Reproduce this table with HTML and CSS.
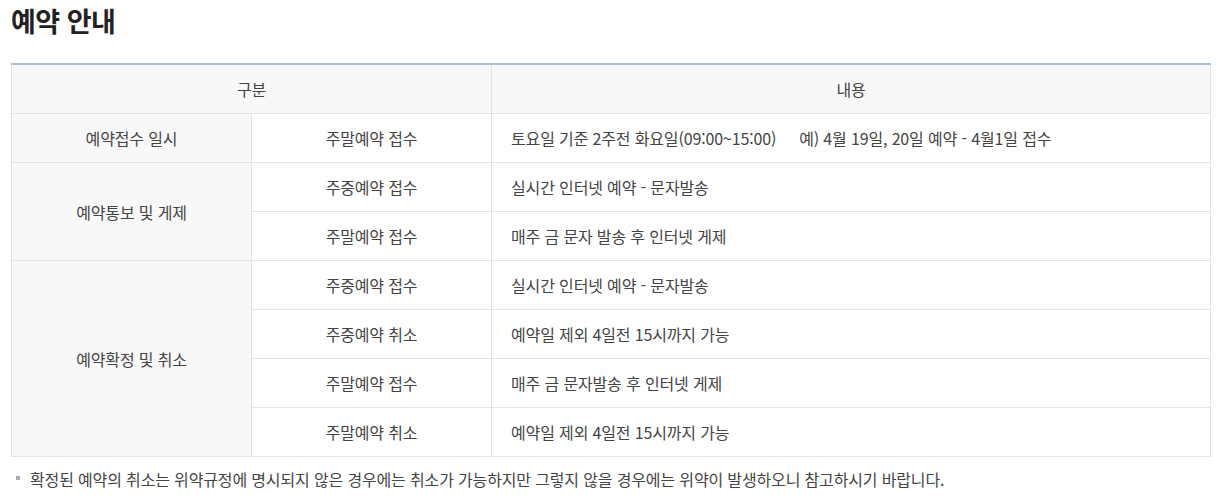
FILE: index.html
```html
<!DOCTYPE html>
<html lang="ko">
<head>
  <meta charset="UTF-8">
  <title>예약 안내</title>
  <link rel="stylesheet" href="styles.css">
</head>
<body>
  <div class="wrap">
    <h2 class="title">예약 안내</h2>

    <table class="info-table">
      <colgroup>
        <col class="c1">
        <col class="c2">
        <col>
      </colgroup>
      <thead>
        <tr>
          <th colspan="2">구분</th>
          <th>내용</th>
        </tr>
      </thead>
      <tbody>
        <tr>
          <th>예약접수 일시</th>
          <td class="mid">주말예약 접수</td>
          <td>토요일 기준 2주전 화요일(09:00~15:00)<span class="gap"></span>예) 4월 19일, 20일 예약 - 4월1일 접수</td>
        </tr>
        <tr>
          <th rowspan="2">예약통보 및 게제</th>
          <td class="mid">주중예약 접수</td>
          <td>실시간 인터넷 예약 - 문자발송</td>
        </tr>
        <tr>
          <td class="mid">주말예약 접수</td>
          <td>매주 금 문자 발송 후 인터넷 게제</td>
        </tr>
        <tr>
          <th rowspan="4">예약확정 및 취소</th>
          <td class="mid">주중예약 접수</td>
          <td>실시간 인터넷 예약 - 문자발송</td>
        </tr>
        <tr>
          <td class="mid">주중예약 취소</td>
          <td>예약일 제외 4일전 15시까지 가능</td>
        </tr>
        <tr>
          <td class="mid">주말예약 접수</td>
          <td>매주 금 문자발송 후 인터넷 게제</td>
        </tr>
        <tr>
          <td class="mid">주말예약 취소</td>
          <td>예약일 제외 4일전 15시까지 가능</td>
        </tr>
      </tbody>
    </table>

    <p class="note">확정된 예약의 취소는 위약규정에 명시되지 않은 경우에는 취소가 가능하지만 그렇지 않을 경우에는 위약이 발생하오니 참고하시기 바랍니다.</p>
  </div>
</body>
</html>
```

FILE: styles.css
```css
body {
  margin: 0;
  font-family: "Noto Sans CJK KR", "Noto Sans", sans-serif;
  color: #444;
  background: #fff;
}

.wrap {
  padding: 0 16px 0 11px;
}

.title {
  margin: 0;
  padding-top: 2px;
  font-size: 27px;
  line-height: 38px;
  font-weight: 700;
  color: #222;
  letter-spacing: -0.5px;
}

.info-table {
  width: 1200px;
  margin-top: 23px;
  border-collapse: collapse;
  border-top: 2px solid #a7c3df;
  font-size: 16px;
  letter-spacing: -0.15px;
  table-layout: fixed;
}

.info-table col.c1,
.info-table col.c2 {
  width: 240px;
}

.info-table th,
.info-table td {
  height: 48px;
  padding: 0 19px;
  border: 1px solid #e3e3e3;
  font-weight: 400;
  color: #444;
  vertical-align: middle;
}

.info-table thead th {
  border-top: none;
}

.info-table th {
  background: #f8f8f8;
  text-align: center;
}

.info-table td.mid {
  text-align: center;
}

.gap {
  display: inline-block;
  width: 23px;
}

.note {
  position: relative;
  margin: 11px 0 0;
  padding-left: 19px;
  font-size: 16px;
  letter-spacing: -0.15px;
  line-height: 22px;
  color: #444;
}

.note::before {
  content: "";
  position: absolute;
  left: 5px;
  top: 8px;
  width: 4px;
  height: 4px;
  background: #b0a8b4;
}
```
